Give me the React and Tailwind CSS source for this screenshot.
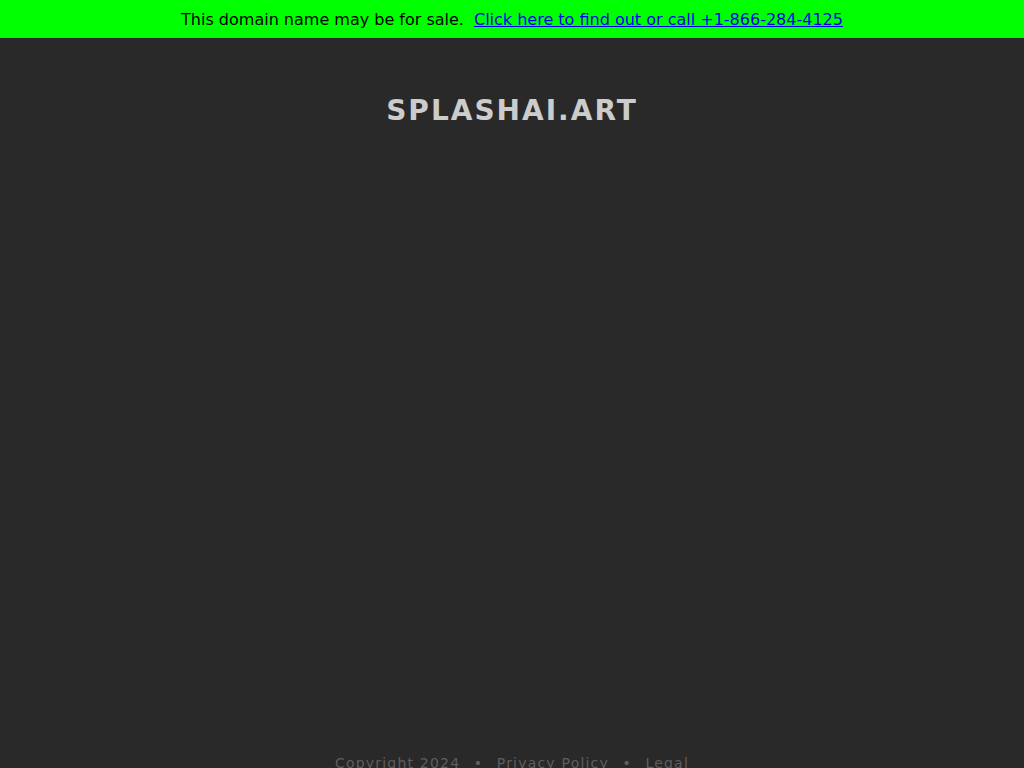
export default function App() {
  return (
    <div className="min-h-screen bg-[#292929] font-['DejaVu_Sans',sans-serif]">
      <div className="h-[38px] pt-[2px] bg-[#00ff00] flex items-center justify-center text-[16px] text-black">
        <span>This domain name may be for sale.</span>
        <a href="#" className="ml-[10px] text-[#0000ee] underline">
          Click here to find out or call +1-866-284-4125
        </a>
      </div>
      <div className="h-[715px] pt-[55px]">
        <h1 className="text-center text-[28px] leading-[36px] font-bold tracking-[2px] text-[#cccccc]">
          SPLASHAI.ART
        </h1>
      </div>
      <div className="flex items-center justify-center gap-[13.5px] text-[14px] leading-[20px] tracking-[1.2px] text-[#5e5e5e]">
        <span>Copyright 2024</span>
        <span>•</span>
        <a href="#">Privacy Policy</a>
        <span>•</span>
        <a href="#">Legal</a>
      </div>
    </div>
  );
}
